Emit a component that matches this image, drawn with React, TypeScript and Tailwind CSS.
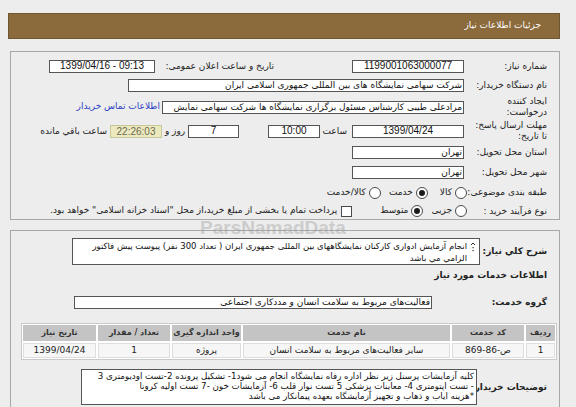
import type { ReactNode } from 'react';

const fa = "font-['DejaVu_Sans',sans-serif]";
const num = "font-['Liberation_Sans','DejaVu_Sans',sans-serif]";

const Field = ({ className, children, ltr = false }: { className: string; children?: ReactNode; ltr?: boolean }) => (
  <div
    dir={ltr ? 'ltr' : undefined}
    className={`flex h-[13px] shrink-0 items-center overflow-hidden whitespace-nowrap border border-[#555] bg-white leading-none text-[#111] ${
      ltr ? `justify-center text-[10px] ${num}` : 'text-[9px]'
    } ${className}`}
  >
    {children}
  </div>
);

const Radio = ({ checked = false }: { checked?: boolean }) => (
  <span className="flex h-[12px] w-[12px] shrink-0 items-center justify-center rounded-full border border-[#4a4a4a] bg-white">
    {checked && <span className="h-[6px] w-[6px] rounded-full bg-[#1c1c1c]" />}
  </span>
);

const Label = ({ className = '', children }: { className?: string; children: ReactNode }) => (
  <div className={`shrink-0 whitespace-nowrap text-[9px] leading-[11px] text-[#222] ${className}`}>{children}</div>
);

const columns = [
  { title: 'ردیف', value: '1', w: 'w-[29px]' },
  { title: 'کد خدمت', value: 'ص-86-869', w: 'w-[72px]' },
  { title: 'نام خدمت', value: 'سایر فعالیت‌های مربوط به سلامت انسان', w: 'w-[207px]' },
  { title: 'واحد اندازه گیری', value: 'پروژه', w: 'w-[69px]' },
  { title: 'تعداد / مقدار', value: '1', w: 'w-[72px]' },
  { title: 'تاریخ نیاز', value: '1399/04/24', w: 'w-[73px]' },
];

export default function App() {
  return (
    <div className={`relative h-[407px] w-[576px] overflow-hidden bg-[#ededed] ${fa}`}>
      {/* title bar */}
      <div className="pl-[8px] pt-[13px]">
        <div
          dir="rtl"
          className="flex h-[26px] w-[552px] items-center border border-[#6f5632] bg-[#8b6a3c] pr-[18px] text-[9px] text-white"
        >
          جزئیات اطلاعات نیاز
        </div>
      </div>

      {/* general info */}
      <div className="pl-[10px] pt-[12px]">
        <div dir="rtl" className="h-[169px] w-[550px] border border-[#a8a8a8] pr-[12px] pt-[4px]">
          <div className="flex h-[20px] items-center">
            <Label className="w-[83px]">شماره نیاز:</Label>
            <Field ltr className="w-[112px]">1199001063000077</Field>
            <div className="w-[78px] shrink-0" />
            <Label className="w-[119px] pl-[9px]">تاریخ و ساعت اعلان عمومی:</Label>
            <Field ltr className="w-[106px]">1399/04/16 - 09:13</Field>
          </div>

          <div className="flex h-[18px] items-center">
            <Label className="w-[83px]">نام دستگاه خریدار:</Label>
            <Field className="w-[336px] pr-[1px]">شرکت سهامی نمایشگاه های بین المللی جمهوری اسلامی ایران</Field>
          </div>

          <div className="flex h-[26px] items-center">
            <Label className="w-[83px]">
              ایجاد کننده
              <br />
              درخواست:
            </Label>
            <Field className="w-[302px] pr-[1px]">مرادعلی طیبی کارشناس مسئول برگزاری نمایشگاه ها شرکت سهامی نمایش</Field>
            <div className="shrink-0 whitespace-nowrap pr-[2px] text-[9px] text-[#2b3fc4]">اطلاعات تماس خریدار</div>
          </div>

          <div className="flex h-[22px] items-center">
            <Label className="w-[83px]">
              مهلت ارسال پاسخ:
              <br />
              تا تاریخ:
            </Label>
            <Field ltr className="w-[112px]">1399/04/24</Field>
            <Label className="w-[32px] pr-[5px]">ساعت</Label>
            <Field ltr className="w-[52px]">10:00</Field>
            <div className="w-[29px] shrink-0" />
            <Field ltr className="w-[51px]">7</Field>
            <Label className="w-[26px] text-center">روز و</Label>
            <div
              className={`flex h-[13px] w-[52px] shrink-0 items-center justify-center border border-[#c9c69a] bg-[#ebe9bd] text-[10px] text-[#6b6b55] ${num}`}
            >
              22:26:03
            </div>
            <Label className="pr-[3px]">ساعت باقي مانده</Label>
          </div>

          <div className="flex h-[21px] items-center">
            <Label className="w-[83px]">استان محل تحویل:</Label>
            <Field className="w-[112px] pr-[1px]">تهران</Field>
          </div>

          <div className="flex h-[19px] items-center">
            <Label className="w-[83px]">شهر محل تحویل:</Label>
            <Field className="w-[112px] pr-[1px]">تهران</Field>
          </div>

          <div className="flex h-[21px] items-center whitespace-nowrap text-[9px] text-[#222]">
            <Label className="w-[80px]">طبقه بندی موضوعی:</Label>
            <Radio />
            <span className="pr-[3px] pl-[12px]">کالا</span>
            <Radio checked />
            <span className="pr-[3px] pl-[8px]">خدمت</span>
            <Radio />
            <span className="pr-[3px]">کالا/خدمت</span>
          </div>

          <div className="flex h-[16px] items-center whitespace-nowrap text-[9px] text-[#222]">
            <Label className="w-[80px]">نوع فرآیند خرید :</Label>
            <Radio />
            <span className="pr-[3px] pl-[8px]">جزیی</span>
            <Radio checked />
            <span className="pr-[3px] pl-[28px]">متوسط</span>
            <span className="h-[11px] w-[11px] shrink-0 border border-[#4a4a4a] bg-white" />
            <span className="pr-[4px]">
              پرداخت تمام یا بخشی از مبلغ خرید،از محل "اسناد خزانه اسلامی" خواهد بود.
            </span>
          </div>
        </div>
      </div>

      {/* service details */}
      <div className="pl-[10px] pt-[10px]">
        <div dir="rtl" className="h-[200px] w-[550px] border border-[#a8a8a8] pt-[7px]">
          <div className="flex h-[27px] items-center pr-[12px]">
            <Label className="w-[67px] font-bold">شرح کلي نیاز:</Label>
            <div className="relative h-[27px] w-[408px] shrink-0 overflow-hidden border border-[#555] bg-white pt-[1px] pr-[12px] text-[8.5px] leading-[12px] text-[#111]">
              <svg className="absolute top-[3px] right-[3px]" width="6" height="10" viewBox="0 0 6 10">
                <path d="M1 3 L3 1 L5 3" fill="none" stroke="#333" strokeWidth="1" />
                <rect x="2.5" y="5" width="1.2" height="1.2" fill="#333" />
                <rect x="2.5" y="8" width="1.2" height="1.2" fill="#333" />
              </svg>
              <div className="whitespace-nowrap">
                انجام آزمایش ادواری کارکنان نمایشگاههای بین المللی جمهوری ایران ( تعداد 300 نفر) پیوست پیش فاکتور
              </div>
              <div className="whitespace-nowrap">الزامي مي باشد</div>
            </div>
          </div>

          <div className="flex h-[22px] items-center pr-[12px] text-[9px] font-bold text-[#222]">
            اطلاعات خدمات مورد نیاز
          </div>

          <div className="flex h-[30px] items-center pr-[12px]">
            <Label className="w-[115px] font-bold">گروه خدمت:</Label>
            <Field className="w-[358px] pr-[1px]">فعالیت‌های مربوط به سلامت انسان و مددکاری اجتماعی</Field>
          </div>

          <div className="mt-[6px] pr-[2px]">
            <div className="w-[536px] border border-[#c9c9c9] bg-white p-[1px]">
              <div className="flex gap-[2px]">
                {columns.map((c) => (
                  <div
                    key={c.title}
                    className={`flex h-[16px] items-center justify-center whitespace-nowrap bg-[#c4c4c4] text-[8px] font-bold text-[#333] ${c.w}`}
                  >
                    {c.title}
                  </div>
                ))}
              </div>
              <div className="mt-[2px] flex gap-[2px]">
                {columns.map((c) => (
                  <div
                    key={c.title}
                    className={`flex h-[15px] items-center justify-center whitespace-nowrap border border-[#dedede] bg-[#f6f6f6] text-[9px] text-[#222] ${c.w}`}
                  >
                    {c.value}
                  </div>
                ))}
              </div>
            </div>
          </div>

          <div className="mt-[9px] flex h-[36px] items-center pr-[12px]">
            <Label className="w-[70px] font-bold">توضیحات خریدار:</Label>
            <div className="h-[36px] w-[396px] shrink-0 overflow-hidden border border-[#555] bg-white pt-[1px] pr-[2px] text-[8.7px] leading-[10px] text-[#111]">
              <div className="whitespace-nowrap">
                کلیه آزمایشات پرسنل زیر نظر  اداره رفاه نمایشگاه انجام می شود1- تشکیل پرونده 2-تست اودیومتری 3
              </div>
              <div className="whitespace-nowrap">
                - تست اپتومتری 4- معاینات پزشکی 5 تست نوار قلب 6- آزمایشات خون -7 تست اولیه کرونا
              </div>
              <div className="whitespace-nowrap">*هزینه ایاب و ذهاب  و تجهیز آزمایشگاه بعهده پیمانکار می باشد</div>
            </div>
          </div>
        </div>
      </div>

      {/* watermark */}
      <div className="pointer-events-none absolute top-[218px] left-[200px] font-['Liberation_Sans',sans-serif] text-[19px] leading-none font-bold text-[#9c9c9c] opacity-40">
        ParsNamadData
      </div>
    </div>
  );
}
